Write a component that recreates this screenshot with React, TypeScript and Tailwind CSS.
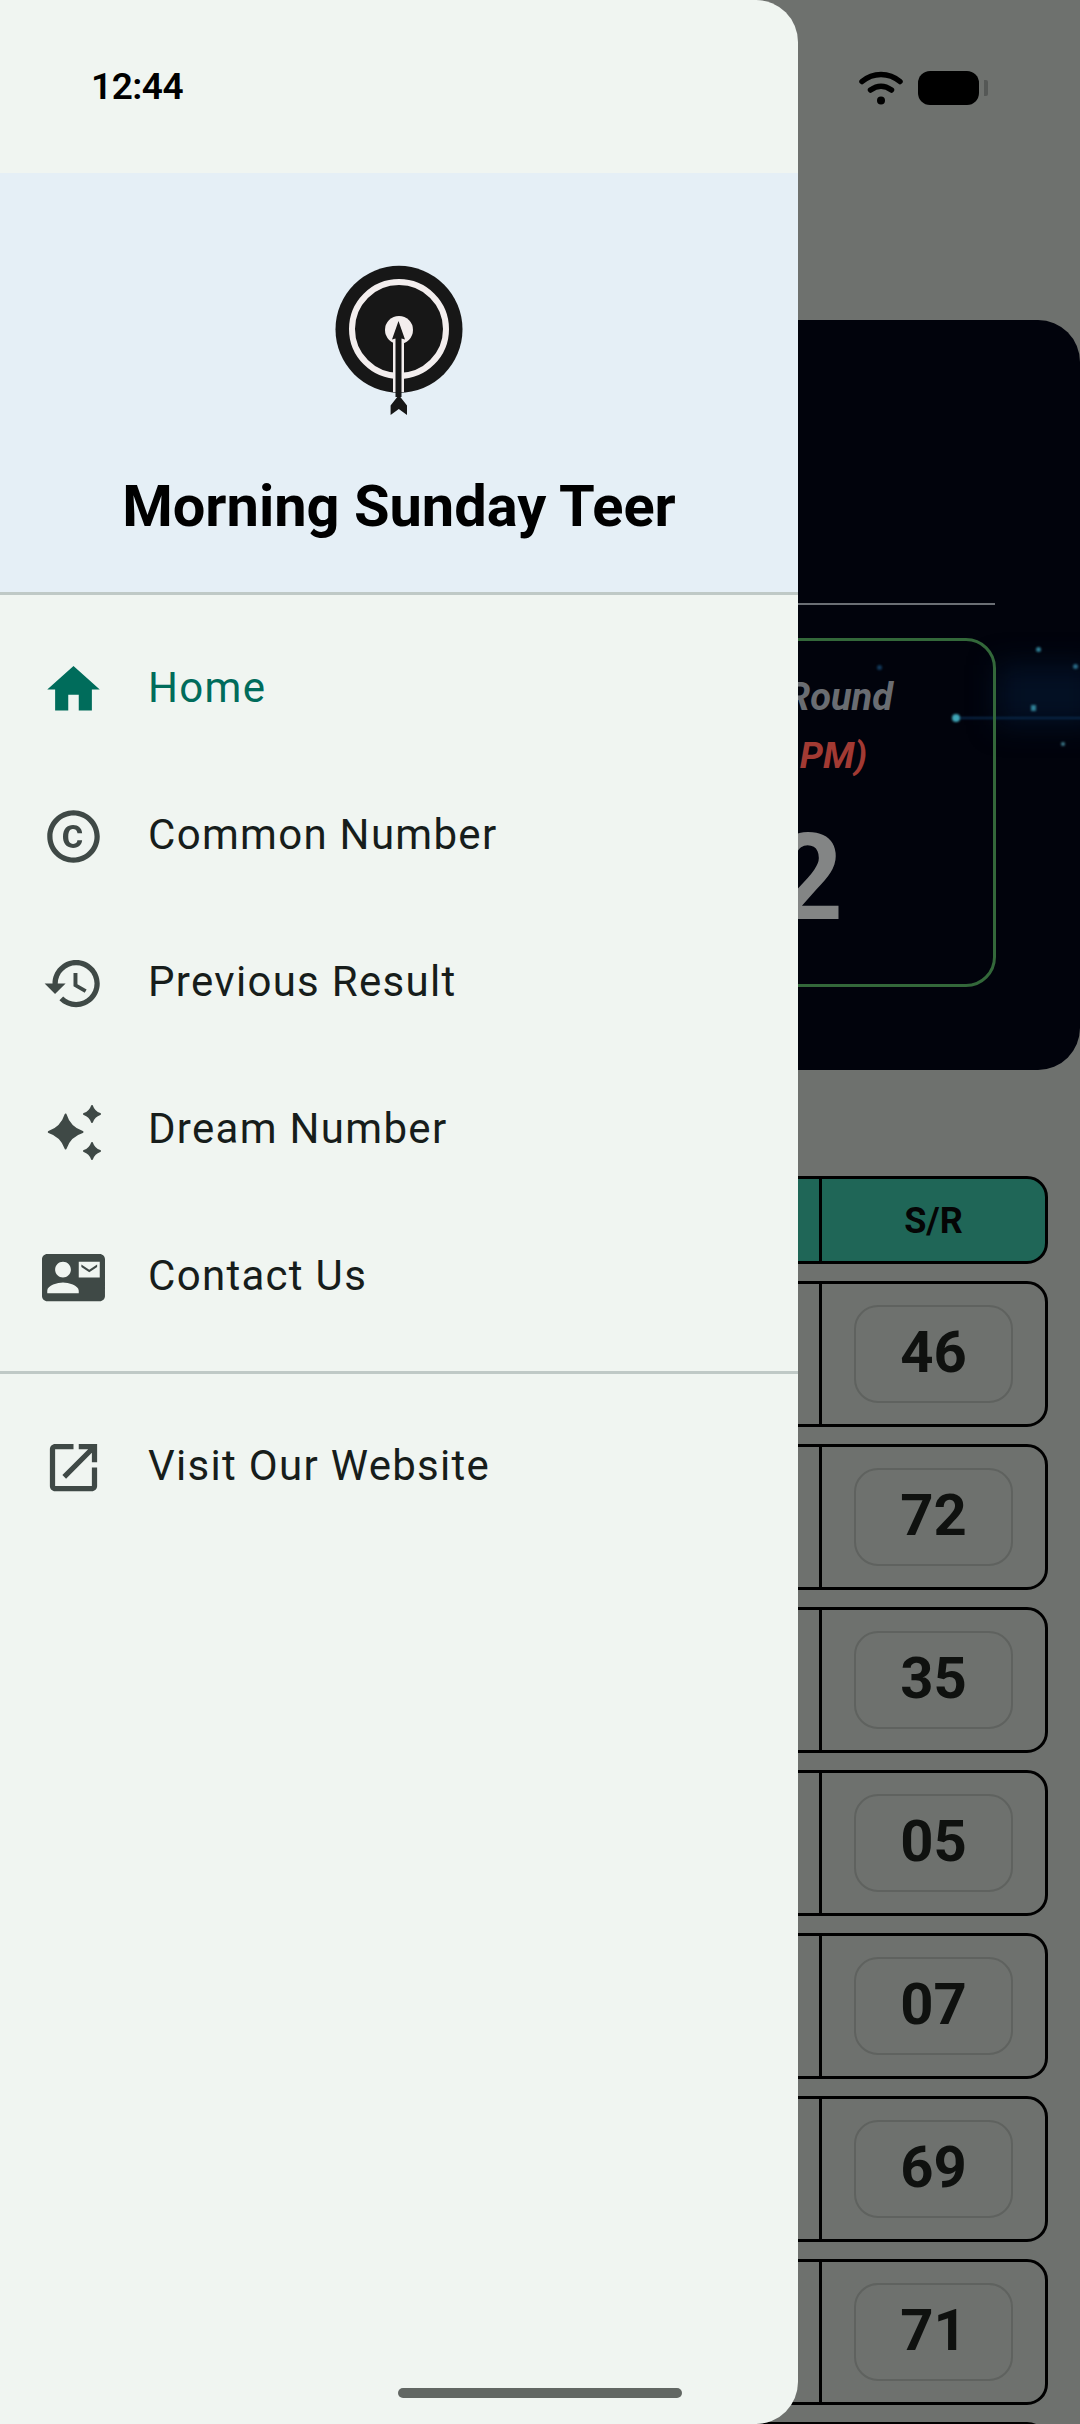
import type { ReactNode } from "react";

const font = { fontFamily: "Roboto, sans-serif" };

const rows = ["46", "72", "35", "05", "07", "69", "71", ""];

const HomeIcon = () => (
  <svg viewBox="0 0 24 24" className="h-[63px] w-[63px]" fill="#006c5b">
    <path d="M10 20v-6h4v6h5v-8h3L12 3 2 12h3v8z" />
  </svg>
);

const CopyIcon = () => (
  <svg viewBox="0 0 24 24" className="h-[63px] w-[63px]" fill="#3f4946">
    <path d="M11.88 9.14c1.28.06 1.61 1.15 1.63 1.66h1.79c-.08-1.98-1.49-3.19-3.45-3.19C9.64 7.61 8 9 8 12.14c0 1.94.93 4.24 3.84 4.24 2.22 0 3.41-1.65 3.44-2.95h-1.79c-.03.59-.45 1.38-1.63 1.44-1.31-.04-1.86-1.06-1.86-2.73 0-2.89 1.28-2.98 1.88-3zM12 2C6.48 2 2 6.48 2 12s4.48 10 10 10 10-4.48 10-10S17.52 2 12 2zm0 18c-4.41 0-8-3.59-8-8s3.59-8 8-8 8 3.59 8 8-3.59 8-8 8z" />
  </svg>
);

const HistoryIcon = () => (
  <svg viewBox="0 0 24 24" className="h-[63px] w-[63px]" fill="#3f4946">
    <path d="M13 3c-4.97 0-9 4.03-9 9H1l3.89 3.89.07.14L9 12H6c0-3.87 3.13-7 7-7s7 3.13 7 7-3.13 7-7 7c-1.93 0-3.68-.79-4.94-2.06l-1.42 1.42C8.27 19.99 10.51 21 13 21c4.97 0 9-4.03 9-9s-4.03-9-9-9zm-1 5v5l4.28 2.54.72-1.21-3.5-2.08V8H12z" />
  </svg>
);

const SparkleIcon = () => (
  <svg viewBox="0 0 63 63" className="h-[63px] w-[63px]" fill="#3f4946" stroke="#3f4946" strokeWidth="2" strokeLinejoin="round">
    <path d="M23.6 15.5Q27.5 28.5 40.5 33Q27.5 37 23.6 49.5Q19.5 37 6.8 33Q19.5 28.5 23.6 15.5z" />
    <path d="M50 7Q52 13 58 15Q52 17 50 23Q48 17 42 15Q48 13 50 7z" />
    <path d="M50 44Q52 50 58 52Q52 54 50 60Q48 54 42 52Q48 50 50 44z" />
  </svg>
);

const ContactIcon = () => (
  <svg viewBox="0 0 24 24" className="h-[63px] w-[63px]" fill="#3f4946">
    <path d="M21 8V7l-3 2-3-2v1l3 2 3-2zm1-5H2C.9 3 0 3.9 0 5v14c0 1.1.9 2 2 2h20c1.1 0 1.99-.9 1.99-2L24 5c0-1.1-.9-2-2-2zM8 6c1.66 0 3 1.34 3 3s-1.34 3-3 3-3-1.34-3-3 1.34-3 3-3zm6 12H2v-1c0-2 4-3.1 6-3.1s6 1.1 6 3.1v1zm8-6h-8V6h8v6z" />
  </svg>
);

const OpenIcon = () => (
  <svg viewBox="0 0 24 24" className="h-[63px] w-[63px]" fill="#3f4946">
    <path d="M19 19H5V5h7V3H5c-1.11 0-2 .9-2 2v14c0 1.1.89 2 2 2h14c1.1 0 2-.9 2-2v-7h-2v7zM14 3v2h3.59l-9.83 9.83 1.41 1.41L19 6.41V10h2V3h-7z" />
  </svg>
);

function NavItem({ icon, label, active }: { icon: ReactNode; label: string; active?: boolean }) {
  return (
    <div className="flex h-[147px] items-center pl-[42px]">
      <div className="flex w-[63px] shrink-0 items-center justify-center">{icon}</div>
      <span
        className={`ml-[43px] pb-[3px] text-[42px] leading-none tracking-[1.3px] ${active ? "text-[#006c5b]" : "text-[#171d1b]"}`}
      >
        {label}
      </span>
    </div>
  );
}

function Backdrop() {
  return (
    <div className="flex h-[2424px] flex-col overflow-hidden bg-[#6e716e] pl-[32px]">
      <div className="relative mt-[320px] h-[750px] shrink-0 overflow-hidden rounded-[42px] bg-[#01030c]">
        {/* blue haze and light specks of the card picture */}
        <div className="absolute left-[965px] top-[345px] h-[60px] w-[100px] bg-[#031024] blur-[14px]" />
        <div className="absolute left-[924px] top-[397px] h-[2px] w-[130px] bg-[#0a2a4c] blur-[1px]" />
        <div className="absolute left-[920px] top-[394px] h-[8px] w-[8px] rounded-full bg-[#3fa6b8] blur-[1px]" />
        <div className="absolute left-[999px] top-[385px] h-[6px] w-[5px] bg-[#2f7f95] blur-[1px]" />
        <div className="absolute left-[1004px] top-[327px] h-[5px] w-[5px] rounded-full bg-[#2f7f95] blur-[1px]" />
        <div className="absolute left-[1041px] top-[344px] h-[5px] w-[5px] rounded-full bg-[#2a6c88] blur-[1px]" />
        <div className="absolute left-[1029px] top-[422px] h-[4px] w-[4px] rounded-full bg-[#3f7f90] blur-[1px]" />
        <div className="absolute left-[845px] top-[345px] h-[5px] w-[5px] rounded-full bg-[#123a5c] blur-[1px]" />

        <div className="absolute left-0 top-[283px] h-[2px] w-[963px] bg-[#6b6f75]" />
        <div className="absolute left-0 top-[318px] h-[349px] w-[964px] rounded-[30px] border-[3px] border-[#33683a]">
          <div className="mt-[37px] pr-[100px] text-right text-[38px] font-bold italic leading-none text-[#6a6d72]">Round</div>
          <div className="mt-[21px] pr-[126px] text-right text-[37px] font-bold italic leading-none text-[#a23a33]">PM)</div>
          <div className="mt-[44px] pr-[150px] text-right text-[120px] font-bold leading-none text-[#838585]">2</div>
        </div>
      </div>
      <div className="mt-[106px] flex flex-col gap-[17px] pr-[32px] text-[#0f110f]">
        <div className="flex h-[88px] shrink-0 overflow-hidden rounded-[21px] border-[3px] border-black bg-[#1f6657]">
          <div className="flex-1 border-r-[3px] border-black" />
          <div className="flex w-[223px] items-center justify-center pt-[1px] text-[36px] font-bold text-[#050505]">S/R</div>
        </div>
        {rows.map((value, i) => (
          <div key={i} className="flex h-[146px] shrink-0 overflow-hidden rounded-[21px] border-[3px] border-black">
            <div className="flex-1 border-r-[3px] border-black" />
            <div className="flex w-[223px] items-center justify-center">
              <div className="flex h-[98px] w-[159px] items-center justify-center rounded-[24px] border-2 border-[#5f625f] pb-[3px] text-[58px] font-bold">
                {value}
              </div>
            </div>
          </div>
        ))}
      </div>
    </div>
  );
}

function Drawer() {
  return (
    <div className="absolute left-0 top-0 flex h-[2424px] w-[798px] flex-col overflow-hidden rounded-r-[42px] bg-[#f0f5f1]">
      <div className="flex h-[173px] shrink-0 items-start pl-[91px] pt-[64px]">
        <span className="text-[37px] font-semibold leading-[46px] tracking-[-0.5px] text-black">12:44</span>
      </div>
      <div className="flex h-[422px] shrink-0 flex-col items-center border-b-[3px] border-[#bfc9c6] bg-[#e5eff6]">
        <svg viewBox="34 24 130 150" className="mt-[92px] h-[150px] w-[130px] shrink-0">
          <circle cx="99" cy="88.3" r="63.5" fill="#171717" />
          <circle cx="99" cy="88" r="47" fill="none" stroke="#f3eeee" strokeWidth="6" />
          <circle cx="99" cy="89" r="14" fill="#f3eeee" />
          <path d="M93 98h11v53h-11z" fill="#f3eeee" />
          <path d="M98.5 80l6.5 18.5-3.5-1V156H95.5V97.5L92 98.5z" fill="#171717" />
          <path d="M98.8 154l8.2 10.5V174l-8.2-6-8.2 6v-9.5z" fill="#171717" />
        </svg>
        <div className="mt-[63px] text-[57.75px] font-bold leading-none text-black">Morning Sunday Teer</div>
      </div>
      <div className="flex flex-col pt-[21px]">
        <NavItem icon={<HomeIcon />} label="Home" active />
        <NavItem icon={<CopyIcon />} label="Common Number" />
        <NavItem icon={<HistoryIcon />} label="Previous Result" />
        <NavItem icon={<SparkleIcon />} label="Dream Number" />
        <NavItem icon={<ContactIcon />} label="Contact Us" />
      </div>
      <div className="mt-[20px] h-[3px] shrink-0 bg-[#bfc9c6]" />
      <div className="mt-[20px]">
        <NavItem icon={<OpenIcon />} label="Visit Our Website" />
      </div>
    </div>
  );
}

export default function App() {
  return (
    <div className="relative h-[2424px] w-[1080px] overflow-hidden" style={font}>
      <Backdrop />
      <Drawer />
      {/* status icons sit over the dimmed page */}
      <div className="absolute left-[859px] top-[71px] flex items-center">
        <svg viewBox="0 0 44 34" className="h-[34px] w-[44px]" fill="none" stroke="#000" strokeWidth="5.5" strokeLinecap="round">
          <path d="M3 10.5C14 1 30 1 41 10.5" />
          <path d="M11.5 19c7-5 14-5 21 0" />
          <circle cx="22" cy="29.5" r="4" fill="#000" stroke="none" />
        </svg>
        <div className="ml-[15px] h-[34px] w-[61px] rounded-[12px] bg-black" />
        <div className="ml-[5px] h-[16px] w-[4px] rounded-r-[2px] bg-[#555856]" />
      </div>
      <div className="absolute bottom-[26px] left-[398px] h-[10px] w-[284px] rounded-full bg-[#626763]" />
    </div>
  );
}
